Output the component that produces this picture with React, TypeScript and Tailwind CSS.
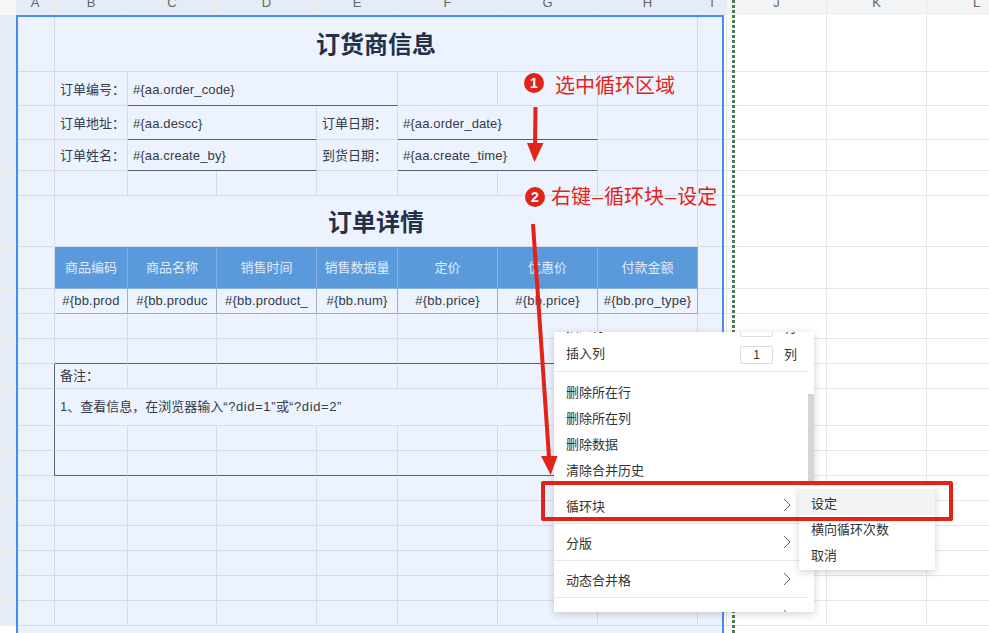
import type { ReactNode } from "react";

const COLS = "grid-cols-[39px_73px_89px_100px_81px_100px_100px_100px_29px_100px_100px_100px]";
const ROWS =
  "grid-rows-[57px_34px_34px_31px_25px_51px_42px_25px_25px_25px_25px_37px_25px_25px_25px_25px_25px_25px_25px_25px]";

type CellDef = { text?: ReactNode; cls?: string };

const LINE = "border-r border-b border-[#e6e6e6]";
const DARK_B = "border-r border-b border-r-[#e6e6e6] border-b-[#555b6b]";
const DARK_R = "border-r border-b border-r-[#555b6b] border-b-[#e6e6e6]";
const LABEL = "flex items-center whitespace-nowrap pl-[5px] pt-[2px] text-[13px] text-[#333]";
const VALUE = `${LABEL} tracking-[0.13px]`;
const TITLE = "col-span-7 flex items-center justify-center pt-[3px] text-[24px] font-bold text-[#1f2733]";
const HEAD = "flex items-center justify-center bg-[#5d9cd8] text-[13px] text-[#f2f6fc] border-r border-b border-[#89b5e2]";
const DATA = "flex items-center justify-center overflow-hidden whitespace-nowrap text-[13px] tracking-[0.2px] text-[#333] border-r border-b border-[#acb1bd]";

const empty = (n: number, cls = ""): CellDef[] => Array.from({ length: n }, () => ({ cls }));

const ROW_DEFS: CellDef[][] = [
  [{}, { text: "订货商信息", cls: TITLE }, ...empty(4)],
  [
    {},
    { text: "订单编号：", cls: LABEL },
    { text: "#{aa.order_code}", cls: `col-span-3 ${VALUE} ${DARK_B}` },
    ...empty(7),
  ],
  [
    {},
    { text: "订单地址：", cls: LABEL },
    { text: "#{aa.descc}", cls: `col-span-2 ${VALUE} ${DARK_B}` },
    { text: "订单日期：", cls: LABEL },
    { text: "#{aa.order_date}", cls: `col-span-2 ${VALUE} ${DARK_B}` },
    ...empty(5),
  ],
  [
    {},
    { text: "订单姓名：", cls: LABEL },
    { text: "#{aa.create_by}", cls: `col-span-2 ${VALUE} ${DARK_B}` },
    { text: "到货日期：", cls: LABEL },
    { text: "#{aa.create_time}", cls: `col-span-2 ${VALUE} ${DARK_B}` },
    ...empty(5),
  ],
  empty(12),
  [{}, { text: "订单详情", cls: TITLE }, ...empty(4)],
  [
    {},
    { text: "商品编码", cls: HEAD },
    { text: "商品名称", cls: HEAD },
    { text: "销售时间", cls: HEAD },
    { text: "销售数据量", cls: HEAD },
    { text: "定价", cls: HEAD },
    { text: "优惠价", cls: HEAD },
    { text: "付款金额", cls: HEAD },
    ...empty(4),
  ],
  [
    {},
    { text: "#{bb.prod", cls: DATA },
    { text: "#{bb.produc", cls: DATA },
    { text: "#{bb.product_", cls: DATA },
    { text: "#{bb.num}", cls: DATA },
    { text: "#{bb.price}", cls: DATA },
    { text: "#{bb.price}", cls: DATA },
    { text: "#{bb.pro_type}", cls: DATA },
    ...empty(4),
  ],
  empty(12),
  [{}, ...empty(7, DARK_B), ...empty(4)],
  [
    { cls: DARK_R },
    { text: "备注：", cls: "flex items-center whitespace-nowrap pl-[5px] text-[13px] text-[#333]" },
    ...empty(5),
    { cls: DARK_R },
    ...empty(4),
  ],
  [
    { cls: DARK_R },
    {
      text: (
        <span>
          1、查看信息，在浏览器输入<span className="tracking-[0.6px]">“?did=1”</span>或
          <span className="tracking-[0.6px]">“?did=2”</span>
        </span>
      ),
      cls: `col-span-7 flex items-center whitespace-nowrap pl-[5px] text-[13px] text-[#333] ${DARK_R}`,
    },
    ...empty(4),
  ],
  [{ cls: DARK_R }, ...empty(6), { cls: DARK_R }, ...empty(4)],
  [{ cls: DARK_R }, ...empty(7, DARK_B), ...empty(4)],
  ...Array.from({ length: 6 }, () => empty(12)),
];

const HEADERS = [
  { l: "A", w: "w-[39px]", on: true },
  { l: "B", w: "w-[73px]", on: true },
  { l: "C", w: "w-[89px]", on: true },
  { l: "D", w: "w-[100px]", on: true },
  { l: "E", w: "w-[81px]", on: true },
  { l: "F", w: "w-[100px]", on: true },
  { l: "G", w: "w-[100px]", on: true },
  { l: "H", w: "w-[100px]", on: true },
  { l: "I", w: "w-[29px]", on: true },
  { l: "J", w: "w-[100px]", on: false },
  { l: "K", w: "w-[100px]", on: false },
  { l: "L", w: "w-[100px]", on: false },
];

const Chevron = () => (
  <svg width="8" height="14" viewBox="0 0 8 14" fill="none" className="shrink-0">
    <path d="M1 1l6 6-6 6" stroke="#666" strokeWidth="1" />
  </svg>
);

const Sep = () => <div className="h-px w-[254px] shrink-0 bg-[#e8e8e8]" />;

const ContextMenu = () => (
  <div className="absolute left-[554px] top-[332px] h-[280px] w-[260px] overflow-hidden bg-white text-[13px] text-[#333] shadow-[0_2px_8px_rgba(0,0,0,0.18)]">
    <div className="-mt-[18px] flex w-[254px] flex-col">
      {[
        ["插入行", "行"],
        ["插入列", "列"],
      ].map(([label, unit], i) => (
        <div key={label} className={`flex h-[27px] items-center pl-3 pr-[11px] ${i === 1 ? "mb-[3px]" : ""}`}>
          <span className="-mt-[2px] flex-1">{label}</span>
          <span className="mr-[11px] flex h-[18px] w-[33px] items-center justify-center rounded-[2px] border border-[#dcdcdc] text-[12px]">
            1
          </span>
          <span>{unit}</span>
        </div>
      ))}
      <Sep />
      <div className="h-[8px]" />
      {["删除所在行", "删除所在列", "删除数据", "清除合并历史"].map((t) => (
        <div key={t} className="flex h-[26px] items-center pl-3">
          {t}
        </div>
      ))}
      <Sep />
      <div className="h-px" />
      {["循环块", "分版", "动态合并格", ""].map((t, i) => (
        <div key={t} className="contents">
          <div
            className={`flex shrink-0 items-center justify-between pl-3 pr-[17px] ${
              i === 0 ? "h-[37px]" : "h-[36px]"
            }`}
          >
            <span className="mt-[4px]">{t}</span>
            <Chevron />
          </div>
          <Sep />
        </div>
      ))}
    </div>
    <div className="absolute right-0 top-[62px] h-[90px] w-[6px] bg-[#d6d6d8]" />
  </div>
);

const SubMenu = () => (
  <div className="absolute left-[799px] top-[486px] flex h-[84px] w-[136px] flex-col bg-white pt-[3px] text-[13px] text-[#333] shadow-[0_2px_8px_rgba(0,0,0,0.18)]">
    <div className="flex h-[26px] items-center bg-[#f2f3f5] pl-3 pt-[4px]">设定</div>
    <div className="flex h-[26px] items-center pl-3 pt-[4px]">横向循环次数</div>
    <div className="flex h-[26px] items-center pl-3 pt-[4px]">取消</div>
  </div>
);

const Badge = ({ n, cls }: { n: string; cls: string }) => (
  <div
    className={`absolute flex h-5 w-5 items-center justify-center rounded-full bg-[#e2231a] text-[14px] font-bold text-white ${cls}`}
  >
    {n}
  </div>
);

export default function App() {
  return (
    <div className="relative h-[633px] w-[989px] overflow-hidden bg-white font-['Liberation_Sans','Noto_Sans_CJK_SC',sans-serif]">
      {/* column letters, scrolled so they are cut at the top */}
      <div className="flex h-[15px]">
        <div className="w-4 shrink-0 bg-[#f5f6f8]" />
        {HEADERS.map((h) => (
          <div
            key={h.l}
            className={`${h.w} shrink-0 border-r text-center text-[13px] leading-[5px] text-[#666] ${
              h.on ? "border-[#f0ede4] bg-[#e6ecf7]" : "border-[#e9e9e9] bg-[#f3f4f6]"
            }`}
          >
            {h.l}
          </div>
        ))}
      </div>

      <div className="flex">
        <div className={`grid w-4 shrink-0 bg-[#e7edf8] ${ROWS}`}>
          {ROW_DEFS.map((_, i) => (
            <div key={i} className="border-b border-[#f0ece2]" />
          ))}
        </div>
        <div className={`grid shrink-0 ${COLS} ${ROWS}`}>
          {ROW_DEFS.flatMap((row, r) =>
            row.map((c, i) => (
              <div key={`${r}-${i}`} className={`${c.cls?.includes("border") ? "" : LINE} ${c.cls ?? ""}`}>
                {c.text}
              </div>
            ))
          )}
        </div>
      </div>

      {/* selected range */}
      <div className="pointer-events-none absolute bottom-[-20px] left-4 top-[15px] w-[708px] border-2 border-[#4a8af4] bg-[#4285f4]/10" />
      {/* page break */}
      <div className="absolute bottom-0 left-[732px] top-0 w-[3px] bg-[repeating-linear-gradient(to_bottom,#4a7a52_0_3px,transparent_3px_5px)]" />

      <ContextMenu />
      <SubMenu />

      {/* annotations drawn on the screenshot */}
      <div className="absolute left-[541px] top-[481px] h-10 w-[412px] rounded-[2px] border-4 border-[#e2231a]" />
      <svg width="989" height="633" className="pointer-events-none absolute left-0 top-0">
        <path d="M535.5 107L535 145" stroke="#e2231a" strokeWidth="4" />
        <path d="M527 143H543.5L534.5 162Z" fill="#e2231a" />
        <path d="M533 224L549 457" stroke="#e2231a" strokeWidth="4" />
        <path d="M541 456H557.5L550.7 475Z" fill="#e2231a" />
      </svg>
      <Badge n="1" cls="left-[524px] top-[73px]" />
      <Badge n="2" cls="left-[525px] top-[187px]" />
      <div className="absolute left-[555px] top-[72px] text-[20px] leading-[28px] text-[#e2231a]">选中循环区域</div>
      <div className="absolute left-[551px] top-[183px] flex text-[20px] leading-[28px] text-[#e2231a]">
        <span>右键</span>
        <span className="mx-px">–</span>
        <span>循环块</span>
        <span className="mx-px">–</span>
        <span>设定</span>
      </div>
    </div>
  );
}
